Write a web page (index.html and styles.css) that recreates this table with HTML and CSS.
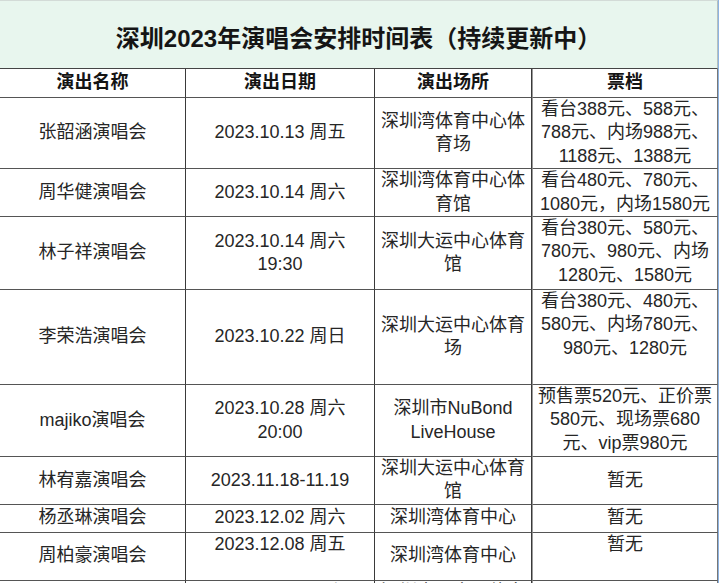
FILE: index.html
```html
<!DOCTYPE html>
<html lang="zh-CN">
<head>
<meta charset="utf-8">
<title>深圳2023年演唱会安排时间表</title>
<link rel="stylesheet" href="styles.css">
</head>
<body>
<div class="sheet">
  <div class="title">深圳2023年演唱会安排时间表（持续更新中）</div>
  <table class="grid">
    <colgroup><col class="c1"><col class="c2"><col class="c3"><col class="c4"></colgroup>
    <thead>
      <tr class="h29"><th>演出名称</th><th>演出日期</th><th>演出场所</th><th>票档</th></tr>
    </thead>
    <tbody>
      <tr class="h71"><td>张韶涵演唱会</td><td>2023.10.13 周五</td><td>深圳湾体育中心体育场</td><td>看台388元、588元、788元、内场988元、1188元、1388元</td></tr>
      <tr class="h48"><td>周华健演唱会</td><td>2023.10.14 周六</td><td>深圳湾体育中心体育馆</td><td>看台480元、780元、1080元，内场1580元</td></tr>
      <tr class="h73"><td>林子祥演唱会</td><td>2023.10.14 周六<br>19:30</td><td>深圳大运中心体育馆</td><td class="top">看台380元、580元、780元、980元、内场1280元、1580元</td></tr>
      <tr class="h95"><td>李荣浩演唱会</td><td>2023.10.22 周日</td><td>深圳大运中心体育场</td><td class="top">看台380元、480元、580元、内场780元、980元、1280元</td></tr>
      <tr class="h72"><td>majiko演唱会</td><td>2023.10.28 周六<br>20:00</td><td>深圳市NuBond LiveHouse</td><td class="top">预售票520元、正价票580元、现场票680元、vip票980元</td></tr>
      <tr class="h47"><td>林宥嘉演唱会</td><td>2023.11.18-11.19</td><td>深圳大运中心体育馆</td><td>暂无</td></tr>
      <tr class="h28"><td>杨丞琳演唱会</td><td>2023.12.02 周六</td><td>深圳湾体育中心</td><td>暂无</td></tr>
      <tr class="h48"><td>周柏豪演唱会</td><td class="top">2023.12.08 周五</td><td>深圳湾体育中心</td><td class="top">暂无</td></tr>
      <tr class="h72"><td>张学友演唱会</td><td class="top">2023.12.09 周六</td><td class="top">深圳大运中心体育馆</td><td>暂无</td></tr>
    </tbody>
  </table>
</div>
</body>
</html>
```
FILE: styles.css
```css
html, body {
  margin: 0;
  padding: 0;
  background: #ffffff;
}

body {
  font-family: "Liberation Sans", "Noto Sans CJK SC", sans-serif;
  color: #262626;
}

.sheet {
  width: 718px;
  border-right: 1px solid #8db3e2;
}

.title {
  box-sizing: border-box;
  height: 69px;
  background: #e8f6ee;
  border-top: 1px solid #d3dbd7;
  border-bottom: 1px solid #444444;
  border-right: 1px solid #b8c0bc;
  display: flex;
  align-items: center;
  justify-content: center;
  font-size: 24px;
  font-weight: bold;
  color: #151515;
  padding-top: 3px;
}

.grid {
  width: 718px;
  table-layout: fixed;
  border-collapse: separate;
  border-spacing: 0;
}

.c1 { width: 186px; }
.c2 { width: 189px; }
.c3 { width: 157px; }
.c4 { width: 186px; }

.grid th,
.grid td {
  box-sizing: border-box;
  padding: 0 3px;
  border-right: 1px solid #3a3a3a;
  border-bottom: 1px solid #555555;
  text-align: center;
  vertical-align: middle;
  font-size: 18px;
  line-height: 23.3px;
  overflow: hidden;
}

.grid th:nth-child(4),
.grid td:nth-child(4) {
  border-left: 1px solid #9a9a9a;
  border-right-color: #777777;
}

.grid th {
  font-weight: bold;
  color: #141414;
}

.grid td.top {
  vertical-align: top;
}

.h28 { height: 28px; }
.h29 { height: 29px; }
.h47 { height: 47px; }
.h48 { height: 48px; }
.h71 { height: 71px; }
.h72 { height: 72px; }
.h73 { height: 73px; }
.h95 { height: 95px; }
```
